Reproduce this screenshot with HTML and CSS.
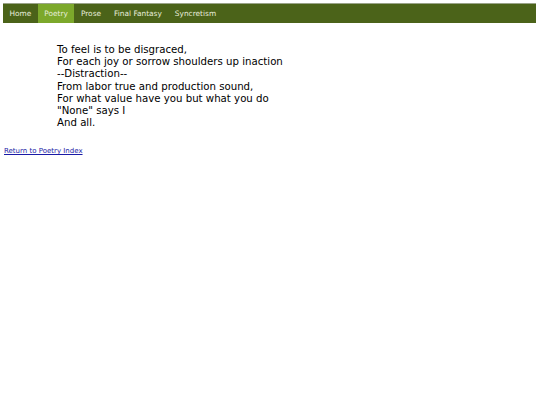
FILE: index.html
```html
<!DOCTYPE html>
<html>
<head>
<meta charset="utf-8">
<link rel="stylesheet" href="styles.css">
</head>
<body>
<nav class="nav">
  <a class="nav-item" href="#">Home</a>
  <a class="nav-item active" href="#">Poetry</a>
  <a class="nav-item" href="#">Prose</a>
  <a class="nav-item" href="#">Final Fantasy</a>
  <a class="nav-item" href="#">Syncretism</a>
</nav>
<div class="poem">
  <p>To feel is to be disgraced,<br>
  For each joy or sorrow shoulders up inaction<br>
  --Distraction--<br>
  From labor true and production sound,<br>
  For what value have you but what you do<br>
  "None" says I<br>
  And all.</p>
</div>
<a class="back" href="#">Return to Poetry Index</a>
</body>
</html>
```
FILE: styles.css
```css
html, body { margin: 0; padding: 0; background: #fff; }
body { padding: 3px 4px 0 3px; font-family: "DejaVu Sans", Verdana, sans-serif; }
.nav {
  display: flex;
  background: #4b6319;
  border-top: 1px solid #9aa488;
  height: 19px;
  padding-left: 0;
}
.nav-item {
  display: flex;
  align-items: center;
  padding: 0 6.5px;
  color: #e8eedc;
  font-size: 7.4px;
  text-decoration: none;
}
.nav-item.active { background: #7ca82b; }
.poem { padding-left: 54px; margin-top: 21px; }
.poem p { margin: 0; font-size: 10.2px; line-height: 12.2px; color: #000; }
.back {
  display: inline-block;
  margin-top: 18px;
  margin-left: 1px;
  font-size: 7px;
  color: #1a1aa6;
}
```
